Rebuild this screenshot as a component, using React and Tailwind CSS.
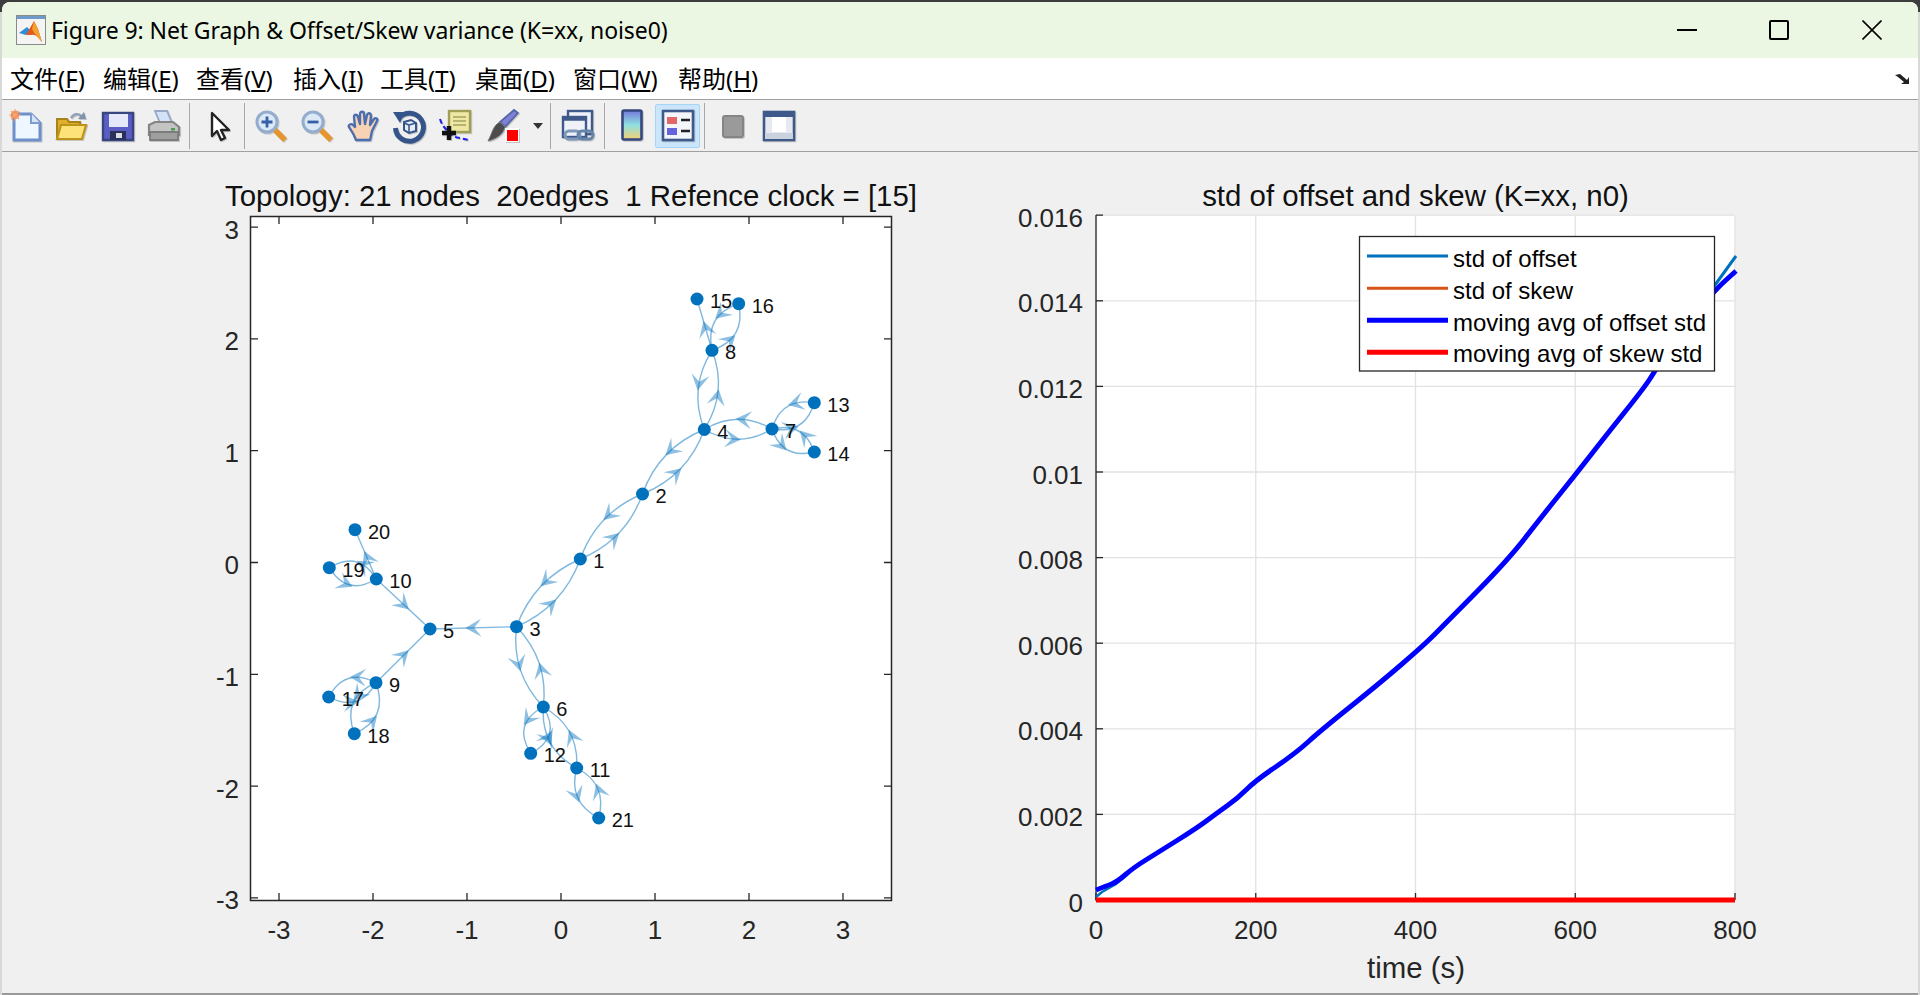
const MENUS = [
  ["文件", "F", "w-[93px]"],
  ["编辑", "E", "w-[93px]"],
  ["查看", "V", "w-[97px]"],
  ["插入", "I", "w-[87px]"],
  ["工具", "T", "w-[95px]"],
  ["桌面", "D", "w-[98px]"],
  ["窗口", "W", "w-[105px]"],
  ["帮助", "H", "w-[100px]"],
]

// node positions in page pixels
const NODES = {
  1: [580.3, 559], 2: [642.5, 494], 3: [516.5, 626.7], 4: [704.3, 429.5], 5: [430, 629],
  6: [543.3, 707], 7: [772, 429], 8: [712, 350.3], 9: [376, 682.7], 10: [376.3, 579],
  11: [576.7, 768], 12: [530.7, 753.3], 13: [814.3, 402.7], 14: [814.3, 452], 15: [697, 299],
  16: [738.7, 303.7], 17: [328.7, 697], 18: [354.3, 733.7], 19: [329.3, 567.7], 20: [355, 529.7],
  21: [598.7, 818],
}

// from, to, arrow position along the edge, bulge
const EDGES = [
  [1, 2, 0.42, 10], [2, 1, 0.42, 10], [2, 4, 0.42, 10], [4, 2, 0.42, 10],
  [1, 3, 0.42, 10], [3, 1, 0.42, 10], [3, 6, 0.42, 10], [6, 3, 0.42, 10],
  [4, 7, 0.42, 10], [7, 4, 0.42, 10], [4, 8, 0.42, 10], [8, 4, 0.42, 10],
  [7, 13, 0.32, 11], [13, 7, 0.32, 11], [7, 14, 0.32, 11], [14, 7, 0.32, 11],
  [8, 16, 0.32, 12], [16, 8, 0.32, 12], [8, 15, 0.42, 0],
  [10, 19, 0.32, 12], [19, 10, 0.4, 12], [10, 20, 0.42, 0],
  [9, 17, 0.32, 12], [17, 9, 0.4, 12], [9, 18, 0.32, 13], [18, 9, 0.32, 13],
  [6, 12, 0.32, 13], [12, 6, 0.4, 13], [6, 11, 0.42, 11], [11, 6, 0.42, 11],
  [11, 21, 0.45, 11], [21, 11, 0.45, 11],
  [3, 5, 0.5, 0], [10, 5, 0.5, 0], [9, 5, 0.5, 0],
]

const CURVE = [
  [1096, 890], [1106, 886], [1117, 882], [1133, 868], [1157, 853], [1197, 828], [1217, 813],
  [1238, 798], [1255, 781], [1296, 753], [1320, 731], [1380, 683], [1424, 645], [1445, 624],
  [1508, 560], [1543, 515], [1576, 474], [1604, 438], [1644, 388], [1655, 371], [1677, 335],
  [1715, 290], [1736, 271],
]

const XTICKS = [-3, -2, -1, 0, 1, 2, 3]

// smooth a point list with quadratic segments through the midpoints
const smooth = (pts) => {
  let d = `M${pts[0][0]} ${pts[0][1]}`
  for (let i = 1; i < pts.length - 1; i++) {
    const mx = (pts[i][0] + pts[i + 1][0]) / 2
    const my = (pts[i][1] + pts[i + 1][1]) / 2
    d += `Q${pts[i][0]} ${pts[i][1]} ${mx} ${my}`
  }
  const last = pts[pts.length - 1]
  return `${d}L${last[0]} ${last[1]}`
}

function GraphEdge({ from, to, t, off }) {
  const [ax, ay] = NODES[from]
  const [bx, by] = NODES[to]
  const dx = bx - ax
  const dy = by - ay
  const len = Math.hypot(dx, dy)
  const cx = (ax + bx) / 2 - (dy / len) * off * 2
  const cy = (ay + by) / 2 + (dx / len) * off * 2
  const px = (1 - t) * (1 - t) * ax + 2 * t * (1 - t) * cx + t * t * bx
  const py = (1 - t) * (1 - t) * ay + 2 * t * (1 - t) * cy + t * t * by
  const tx = 2 * (1 - t) * (cx - ax) + 2 * t * (bx - cx)
  const ty = 2 * (1 - t) * (cy - ay) + 2 * t * (by - cy)
  const tl = Math.hypot(tx, ty)
  const ux = tx / tl
  const uy = ty / tl
  const pts = [
    [px + ux * 8, py + uy * 8],
    [px - ux * 8 - uy * 9, py - uy * 8 + ux * 9],
    [px - ux * 1, py - uy * 1],
    [px - ux * 8 + uy * 9, py - uy * 8 - ux * 9],
  ]
  return (
    <g>
      <path d={`M${ax} ${ay}Q${cx} ${cy} ${bx} ${by}`} fill="none" stroke="#0072bd" strokeOpacity="0.5" strokeWidth="1.4" />
      <polygon points={pts.map((p) => p.join(",")).join(" ")} fill="#0072bd" fillOpacity="0.45" />
    </g>
  )
}

function TopologyPlot() {
  const xs = XTICKS.map((v) => 561 + v * 94)
  const ys = XTICKS.map((v) => 562.5 - v * 111.8)
  return (
    <svg viewBox="2 152 959 841" className="w-[959px] h-[841px] shrink-0 font-['Liberation_Sans',sans-serif]">
      <rect x="250.5" y="216.5" width="641" height="684" fill="#fff" stroke="#262626" strokeWidth="1.5" />
      {xs.map((x) => (
        <path key={x} d={`M${x} 217v7M${x} 900v-7`} stroke="#262626" strokeWidth="1.3" />
      ))}
      {ys.map((y) => (
        <path key={y} d={`M251 ${y}h7M891 ${y}h-7`} stroke="#262626" strokeWidth="1.3" />
      ))}
      {XTICKS.map((v, i) => (
        <text key={v} x={xs[i]} y="939" textAnchor="middle" className="text-[26px] fill-[#262626]">{v}</text>
      ))}
      {XTICKS.map((v, i) => (
        <text key={v} x="239" y={ys[i] + 11.5} textAnchor="end" className="text-[26px] fill-[#262626]">{v}</text>
      ))}
      <text x="571" y="206" textAnchor="middle" className="text-[29.4px] fill-[#111] whitespace-pre">Topology: 21 nodes  20edges  1 Refence clock = [15]</text>
      {EDGES.map(([from, to, t, off]) => (
        <GraphEdge key={`${from}-${to}`} from={from} to={to} t={t} off={off} />
      ))}
      {Object.entries(NODES).map(([id, [x, y]]) => (
        <circle key={id} cx={x} cy={y} r="6.5" fill="#0072bd" />
      ))}
      {Object.entries(NODES).map(([id, [x, y]]) => (
        <text key={id} x={x + 13} y={y + 9} className="text-[20px] fill-[#111]">{id}</text>
      ))}
    </svg>
  )
}

function VariancePlot() {
  const xt = [0, 200, 400, 600, 800]
  const yt = ["0", "0.002", "0.004", "0.006", "0.008", "0.01", "0.012", "0.014", "0.016"]
  return (
    <svg viewBox="961 152 957 841" className="w-[957px] h-[841px] shrink-0 font-['Liberation_Sans',sans-serif]">
      <rect x="1096" y="215.5" width="639" height="684.5" fill="#fff" />
      {xt.map((v, i) => (
        <path key={v} d={`M${1096 + i * 159.75} 216V900`} stroke="#e2e2e2" strokeWidth="1.3" />
      ))}
      {yt.map((v, i) => (
        <path key={v} d={`M1096 ${900 - i * 85.6}H1735`} stroke="#e2e2e2" strokeWidth="1.3" />
      ))}
      <path d="M1096 215V900H1735" fill="none" stroke="#262626" strokeWidth="1.3" />
      {xt.map((v, i) => (
        <path key={v} d={`M${1096 + i * 159.75} 900v-7`} stroke="#262626" strokeWidth="1.3" />
      ))}
      {yt.map((v, i) => (
        <path key={v} d={`M1096 ${900 - i * 85.6}h7`} stroke="#262626" strokeWidth="1.3" />
      ))}
      <polyline points="1096,897 1102,892 1116,884 1133,868" fill="none" stroke="#0072bd" strokeWidth="2.5" />
      <polyline points="1677,335 1715,285 1736,256" fill="none" stroke="#0072bd" strokeWidth="3" />
      <path d={smooth(CURVE)} fill="none" stroke="#00f" strokeWidth="5" strokeLinejoin="round" />
      <path d="M1096 900H1735" stroke="#f00" strokeWidth="5" />
      {xt.map((v, i) => (
        <text key={v} x={1096 + i * 159.75} y="939" textAnchor="middle" className="text-[26px] fill-[#262626]">{v}</text>
      ))}
      {yt.map((v, i) => (
        <text key={v} x="1083" y={900 - i * 85.6 + 11.5} textAnchor="end" className="text-[26px] fill-[#262626]">{v}</text>
      ))}
      <text x="1415.5" y="206" textAnchor="middle" className="text-[29.4px] fill-[#111]">std of offset and skew (K=xx, n0)</text>
      <text x="1416" y="978" textAnchor="middle" className="text-[29.4px] fill-[#262626]">time (s)</text>
      <rect x="1359.5" y="236.5" width="355" height="134.5" fill="#fff" stroke="#262626" strokeWidth="1.3" />
      <path d="M1367 256h81" stroke="#0072bd" strokeWidth="3" />
      <path d="M1367 288.3h81" stroke="#d95319" strokeWidth="3" />
      <path d="M1367 320.3h81" stroke="#00f" strokeWidth="5" />
      <path d="M1367 352.3h81" stroke="#f00" strokeWidth="5" />
      <text x="1453" y="266.5" className="text-[24px] fill-black">std of offset</text>
      <text x="1453" y="298.5" className="text-[24px] fill-black">std of skew</text>
      <text x="1453" y="331" className="text-[24px] fill-black">moving avg of offset std</text>
      <text x="1453" y="362" className="text-[24px] fill-black">moving avg of skew std</text>
    </svg>
  )
}

const ICONS = {
  new: (
    <>
      <path d="M4 4H21L30 13V30H4Z" fill="#eef6ff" stroke="#6f8fca" strokeWidth="3" />
      <path d="M21 3V13H30" fill="#d6e4f8" stroke="#7f9bd0" strokeWidth="2" />
      <circle cx="5" cy="5" r="4" fill="#f0783a" />
      <path d="M5 -1V11M-1 5H11M1 1L9 9M9 1L1 9" stroke="#f3a777" strokeWidth="1.2" />
    </>
  ),
  open: (
    <>
      <path d="M1 28V9H11L13 12H24V28Z" fill="#dfae2c" stroke="#a8821a" strokeWidth="2" />
      <path d="M1 29L5 15H30L26 29Z" fill="#fde27a" stroke="#bd9418" strokeWidth="2.2" />
      <path d="M15 8C18 3 23 3 26 7" fill="none" stroke="#8fa0b8" strokeWidth="2.4" />
      <path d="M22 9L30 9L28 2Z" fill="#7f93b0" />
    </>
  ),
  save: (
    <>
      <path d="M1 3H31V30H1Z" fill="#5a5ec4" stroke="#38467f" strokeWidth="2.4" />
      <rect x="7" y="4" width="19" height="13" fill="#e4e8f8" />
      <rect x="8" y="21" width="16" height="9" fill="#2a3058" />
      <rect x="14" y="23" width="6" height="5" fill="#d8dbe8" />
    </>
  ),
  print: (
    <>
      <path d="M7 1H19L24 13H12Z" fill="#d3e2f7" stroke="#95a9c6" strokeWidth="1.8" />
      <path d="M1 15L7 12H25L31 17V25H1Z" fill="#c4c4c4" stroke="#858585" strokeWidth="2.2" />
      <path d="M2 22H30V30H2Z" fill="#9f9f9f" stroke="#7c7c7c" strokeWidth="1.8" />
      <rect x="23" y="18" width="4" height="2.5" fill="#4f9c4e" />
    </>
  ),
  pointer: (
    <path d="M9 3V26L14 21L18 30L22 28L18 20H26Z" fill="#fff" stroke="#222" strokeWidth="2.4" strokeLinejoin="round" />
  ),
  zoomin: (
    <>
      <path d="M19 19L30 30" stroke="#e5952f" strokeWidth="5.5" />
      <circle cx="12" cy="12" r="10" fill="#dbe9f7" stroke="#94adcd" strokeWidth="3" />
      <path d="M6.5 12H17.5M12 6.5V17.5" stroke="#3560a8" strokeWidth="2.8" />
    </>
  ),
  zoomout: (
    <>
      <path d="M19 19L30 30" stroke="#e5952f" strokeWidth="5.5" />
      <circle cx="12" cy="12" r="10" fill="#dbe9f7" stroke="#94adcd" strokeWidth="3" />
      <path d="M6.5 12H17.5" stroke="#3560a8" strokeWidth="2.8" />
    </>
  ),
  hand: (
    <path
      d="M9 30C7 24 4 20 2 17C1 15 4 13 6 15L8 17L7 7C7 4 10 4 11 7L13 14L13 4C13 1 17 1 17 4L18 14L20 5C21 2 24 3 24 6L23 15L27 9C29 7 31 9 30 11L25 21C24 25 24 27 23 30Z"
      fill="#f8d2b4"
      stroke="#4a6eb0"
      strokeWidth="2.4"
      strokeLinejoin="round"
    />
  ),
  rotate: (
    <>
      <path d="M6 8A14 14 0 1 1 2.5 18" fill="none" stroke="#34548a" strokeWidth="5" />
      <path d="M0 2H12L7 13Z" fill="#34548a" />
      <path d="M11 12L18 10L23 13V21L16 23L11 20Z" fill="#e6edf7" stroke="#34548a" strokeWidth="2" />
      <path d="M11 13L16 15V23M16 15L23 13" fill="none" stroke="#34548a" strokeWidth="1.5" />
    </>
  ),
  cursor: (
    <>
      <rect x="10" y="1" width="21" height="21" fill="#eee8a4" stroke="#a09f55" strokeWidth="2.4" />
      <path d="M14 7H27M14 11H27M14 15H27" stroke="#b7b470" strokeWidth="2" />
      <path d="M1 9C3 16 8 21 14 26C18 28 22 28 30 30" fill="none" stroke="#1c1ce8" strokeWidth="2" strokeDasharray="5 3" />
      <path d="M3 23H17M10 16V30" stroke="#111" strokeWidth="4.5" />
    </>
  ),
  brush: (
    <>
      <path d="M32 3L19 17L14 12L28 0Z" fill="#8080d4" stroke="#5166a6" strokeWidth="1.8" />
      <path d="M14 12L19 17C17 25 10 29 2 31C6 24 7 15 14 12Z" fill="#4c4c4c" stroke="#777" strokeWidth="1" />
      <rect x="19" y="18" width="14" height="14" fill="#fff" />
      <rect x="21" y="20" width="11" height="11" fill="#f00" />
    </>
  ),
  link: (
    <>
      <rect x="6" y="1" width="24" height="23" fill="#eef2f8" stroke="#3f5a8a" strokeWidth="2.4" />
      <rect x="1" y="7" width="23" height="20" fill="#eef2f8" stroke="#3f5a8a" strokeWidth="2.4" />
      <path d="M1 9H24" stroke="#3f5a8a" strokeWidth="3.5" />
      <rect x="3" y="21" width="15" height="8" rx="4" fill="none" stroke="#7f98b8" strokeWidth="3" />
      <rect x="16" y="21" width="15" height="8" rx="4" fill="none" stroke="#6783a8" strokeWidth="3" />
    </>
  ),
  colorbar: (
    <>
      <defs>
        <linearGradient id="cb" x1="0" y1="0" x2="0" y2="1">
          <stop offset="0" stopColor="#7478dc" />
          <stop offset="0.5" stopColor="#8fe0e0" />
          <stop offset="1" stopColor="#f6cf72" />
        </linearGradient>
      </defs>
      <rect x="6.5" y="0.5" width="19" height="29" rx="1.5" fill="url(#cb)" stroke="#35467f" strokeWidth="2.6" />
    </>
  ),
  legend: (
    <>
      <rect x="1" y="1" width="30" height="29" fill="#f4f6fa" stroke="#3f5a8a" strokeWidth="2.6" />
      <rect x="5" y="7" width="10" height="7" fill="#e46868" />
      <rect x="5" y="18" width="10" height="7" fill="#6464dc" />
      <path d="M19 10H28M19 21H28" stroke="#222" strokeWidth="2.6" />
    </>
  ),
  gray: <rect x="6" y="6" width="20" height="21" rx="2" fill="#9a9a9a" stroke="#858585" strokeWidth="2" />,
  tools: (
    <>
      <rect x="1" y="2" width="30" height="28" fill="#e6e9f0" stroke="#3f5a8a" strokeWidth="2.6" />
      <path d="M1 5H31" stroke="#3f5a8a" strokeWidth="4" />
      <rect x="9" y="7" width="14" height="15" fill="#fff" />
      <path d="M2 23H30V29H2Z" fill="#cbd2df" />
    </>
  ),
}

function ToolIcon({ name, className = "w-[46px]" }) {
  return (
    <div className={`flex h-[44px] items-center justify-center ${className}`}>
      <svg viewBox="0 0 32 32" className="h-[32px] w-[32px] overflow-visible drop-shadow-[1px_1px_0_rgba(0,0,0,0.18)]">{ICONS[name]}</svg>
    </div>
  )
}

function Sep({ className }) {
  return <div className={`h-[46px] w-px bg-[#a8a8a8] ${className}`} />
}

function MatlabLogo() {
  return (
    <svg viewBox="0 0 30 30" className="h-[30px] w-[30px]">
      <rect x="0.5" y="0.5" width="29" height="29" fill="#f4f4f4" stroke="#8a8a8a" />
      <rect x="1" y="1" width="28" height="3" fill="#6e9bc8" />
      <path d="M3 18L11 12L15 16L10 20Z" fill="#2f8fd6" />
      <path d="M10 20L18 6L22 14L26 27C22 22 19 19 16 20Z" fill="#e4571f" />
      <path d="M18 6L16 14L19 19L26 27L22 14Z" fill="#f2a22e" />
    </svg>
  )
}

export default function App() {
  return (
    <div className="h-[995px] w-[1920px] overflow-hidden bg-[linear-gradient(#3d3d3d_12px,#d8d8d8_12px)] px-[2px] pt-[2px] font-['Noto_Sans','Noto_Sans_CJK_SC',sans-serif] text-black">
      <div className="flex h-[993px] flex-col overflow-hidden rounded-t-[8px] border-b-2 border-[#999] bg-[#f0f0f0]">
        {/* Title bar */}
        <div className="flex h-[56px] shrink-0 items-center bg-[#ebf7e3] pl-[14px]">
          <MatlabLogo />
          <span className="ml-[5px] flex-1 text-[23px] tracking-[-0.1px]">Figure 9: Net Graph &amp; Offset/Skew variance (K=xx, noise0)</span>
          <div className="flex w-[91px] justify-center">
            <div className="h-[2px] w-[20px] bg-black" />
          </div>
          <div className="flex w-[93px] justify-center">
            <div className="h-[20px] w-[20px] rounded-[2px] border-2 border-black" />
          </div>
          <div className="flex w-[93px] justify-center">
            <svg viewBox="0 0 20 20" className="h-[20px] w-[20px]">
              <path d="M0.5 0.5L19.5 19.5M19.5 0.5L0.5 19.5" stroke="#000" strokeWidth="1.6" />
            </svg>
          </div>
        </div>

        {/* Menu bar */}
        <div className="flex h-[42px] shrink-0 items-center border-b border-[#a0a0a0] bg-white pl-[8px] pr-[8px] text-[24px]">
          {MENUS.map(([label, key, width]) => (
            <span key={key} className={`whitespace-nowrap leading-none ${width}`}>
              {label}(<span className="underline underline-offset-2">{key}</span>)
            </span>
          ))}
          <svg viewBox="0 0 16 12" className="ml-auto h-[12px] w-[16px]">
            <path d="M1 2L6 1L13 7L15 4V11H7L10 9L4 4Z" fill="#222" />
          </svg>
        </div>

        {/* Toolbar */}
        <div className="flex h-[52px] shrink-0 items-center border-b border-[#a0a0a0] pl-[1px]">
          <ToolIcon name="new" />
          <ToolIcon name="open" />
          <ToolIcon name="save" />
          <ToolIcon name="print" />
          <Sep className="ml-[2px] mr-[6px]" />
          <ToolIcon name="pointer" />
          <Sep className="ml-[2px] mr-[3px]" />
          <ToolIcon name="zoomin" />
          <ToolIcon name="zoomout" />
          <ToolIcon name="hand" />
          <ToolIcon name="rotate" />
          <ToolIcon name="cursor" />
          <ToolIcon name="brush" className="w-[48px]" />
          <div className="flex w-[24px] justify-center">
            <div className="h-0 w-0 border-x-[5px] border-t-[6px] border-x-transparent border-t-[#333]" />
          </div>
          <Sep className="mr-[4px]" />
          <ToolIcon name="link" />
          <Sep className="ml-[3px] mr-[4px]" />
          <ToolIcon name="colorbar" />
          <ToolIcon name="legend" className="w-[45px] rounded-[2px] border border-[#a6d4f7] bg-[#cbe6fb]" />
          <Sep className="ml-[4px] mr-[5px]" />
          <ToolIcon name="gray" />
          <ToolIcon name="tools" />
        </div>

        {/* Plots */}
        <div className="flex flex-1 overflow-hidden">
          <TopologyPlot />
          <VariancePlot />
        </div>
      </div>
    </div>
  )
}
